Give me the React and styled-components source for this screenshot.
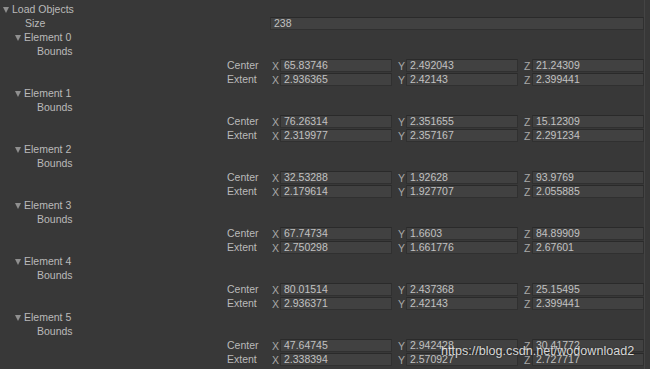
import React from 'react'
import styled, {createGlobalStyle} from 'styled-components'

const elements = [
  {center: ['65.83746', '2.492043', '21.24309'], extent: ['2.936365', '2.42143', '2.399441']},
  {center: ['76.26314', '2.351655', '15.12309'], extent: ['2.319977', '2.357167', '2.291234']},
  {center: ['32.53288', '1.92628', '93.9769'], extent: ['2.179614', '1.927707', '2.055885']},
  {center: ['67.74734', '1.6603', '84.89909'], extent: ['2.750298', '1.661776', '2.67601']},
  {center: ['80.01514', '2.437368', '25.15495'], extent: ['2.936371', '2.42143', '2.399441']},
  {center: ['47.64745', '2.942428', '30.41772'], extent: ['2.338394', '2.570927', '2.727717']},
]

function VectorField({label, values}) {
  return (
    <Row>
      <Label $indent={227}>{label}</Label>
      <Vector>
        {['X', 'Y', 'Z'].map((axis, i) => (
          <Axis key={axis}>
            <AxisLabel>{axis}</AxisLabel>
            <Field>{values[i]}</Field>
          </Axis>
        ))}
      </Vector>
    </Row>
  )
}

export default function App() {
  return (
    <>
      <GlobalStyle />
      <Inspector>
        <Row>
          <Label $indent={3}><Arrow />Load Objects</Label>
        </Row>
        <Row>
          <Label $indent={25}>Size</Label>
          <Field>238</Field>
        </Row>
        {elements.map((el, i) => (
          <React.Fragment key={i}>
            <Row>
              <Label $indent={15}><Arrow />Element {i}</Label>
            </Row>
            <Row>
              <Label $indent={37}>Bounds</Label>
            </Row>
            <VectorField label="Center" values={el.center} />
            <VectorField label="Extent" values={el.extent} />
          </React.Fragment>
        ))}
        <Watermark>https://blog.csdn.net/wodownload2</Watermark>
      </Inspector>
    </>
  )
}

const GlobalStyle = createGlobalStyle`
  body {
    margin: 0;
    background: #383838;
    font-family: "Liberation Sans", Arial, sans-serif;
  }
`;
const Inspector = styled.div`
  position: relative;
  width: 645px;
  height: 369px;
  padding-top: 2px;
  box-sizing: border-box;
  overflow: hidden;
  border-right: 1px solid #444;
  background: #383838;
`;
const Row = styled.div`
  display: grid;
  grid-template-columns: 270px 374px;
  height: 14px;
  align-items: end;
`;
const Label = styled.div`
  display: flex;
  align-items: center;
  padding-left: ${p => p.$indent}px;
  height: 14px;
  font-size: 10.5px;
  color: #bababa;
  white-space: nowrap;
`;
const Arrow = styled.span`
  width: 0;
  height: 0;
  border-left: 3.5px solid transparent;
  border-right: 3.5px solid transparent;
  border-top: 6px solid #8f8f8f;
  margin-right: 3px;
  margin-top: 1px;
`;
const Field = styled.div`
  height: 13px;
  box-sizing: border-box;
  padding-left: 3px;
  background: #414141;
  border: 1px solid #303030;
  border-top-color: #2a2a2a;
  font-size: 10.5px;
  line-height: 11px;
  color: #c2c2c2;
  white-space: nowrap;
  overflow: hidden;
  flex: 1;
`;
const Vector = styled.div`
  display: grid;
  grid-template-columns: repeat(3, 1fr);
  column-gap: 4px;
`;
const Axis = styled.div`
  display: flex;
  align-items: center;
`;
const AxisLabel = styled.span`
  width: 8px;
  padding-left: 2px;
  font-size: 10.5px;
  color: #a8a8a8;
`;
const Watermark = styled.div`
  position: absolute;
  left: 441px;
  top: 344px;
  font-size: 12.6px;
  white-space: nowrap;
  color: rgba(255, 255, 255, 0.82);
  text-shadow: 0 0 2px rgba(0, 0, 0, 0.4);
`;
